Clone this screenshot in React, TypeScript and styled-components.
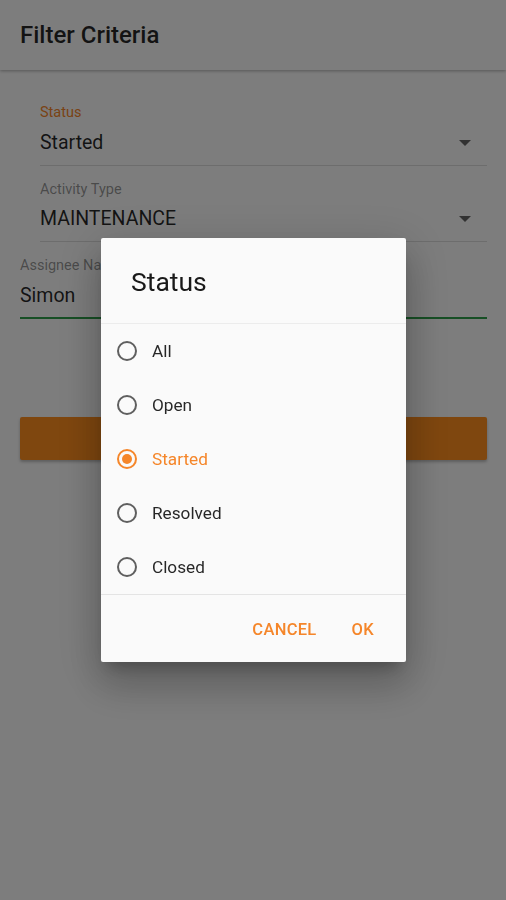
import React from "react";
import styled, { createGlobalStyle } from "styled-components";

const GlobalStyle = createGlobalStyle`
  html, body { margin: 0; padding: 0; }
  body {
    font-family: Roboto, "Noto Sans", "Liberation Sans", sans-serif;
    background: #fafafa;
  }
  * { box-sizing: border-box; }
`;

const ACCENT = "#f5862a";

const Page = styled.div`
  width: 506px;
  min-height: 900px;
  background: #fafafa;
  display: flex;
  flex-direction: column;
`;

const Header = styled.header`
  height: 70px;
  display: flex;
  align-items: center;
  padding: 0 20px;
  background: #fafafa;
  box-shadow: 0 1px 3px rgba(0, 0, 0, 0.3);
`;

const Title = styled.h1`
  margin: 0;
  font-size: 24px;
  font-weight: 500;
  color: rgba(0, 0, 0, 0.85);
  line-height: 28px;
  margin-top: -1px;
`;

const Form = styled.div`
  display: flex;
  flex-direction: column;
  padding: 35px 19px 0 20px;
`;

const Field = styled.div<{ $indent: number; $first?: boolean; $focused?: boolean }>`
  display: flex;
  flex-direction: column;
  margin-left: ${(p) => p.$indent}px;
  margin-top: ${(p) => (p.$first ? 0 : 16)}px;
  padding-bottom: ${(p) => (p.$focused ? 9 : 10)}px;
  border-bottom: ${(p) => (p.$focused ? "2px solid #2e9e4a" : "1px solid rgba(0,0,0,0.12)")};
`;

const Label = styled.div<{ $active?: boolean }>`
  font-size: 14.5px;
  line-height: 16px;
  height: 16px;
  color: ${(p) => (p.$active ? ACCENT : "rgba(0,0,0,0.42)")};
`;

const ValueRow = styled.div<{ $gap: number }>`
  display: flex;
  align-items: center;
  justify-content: space-between;
  margin-top: ${(p) => p.$gap}px;
  height: 24px;
`;

const Value = styled.span`
  font-size: 19.5px;
  line-height: 24px;
  color: rgba(0, 0, 0, 0.85);
`;

const Caret = styled.span`
  width: 0;
  height: 0;
  border-left: 6px solid transparent;
  border-right: 6px solid transparent;
  border-top: 6px solid rgba(0, 0, 0, 0.6);
  margin-right: 16px;
`;

const ApplyButton = styled.div`
  margin-top: 98px;
  height: 43px;
  border-radius: 2px;
  background: #ff8e1e;
  box-shadow: 0 2px 3px rgba(0, 0, 0, 0.25);
`;

const Overlay = styled.div`
  position: fixed;
  inset: 0;
  background: rgba(0, 0, 0, 0.5);
  display: flex;
  align-items: center;
  justify-content: center;
`;

const Dialog = styled.div`
  width: 305px;
  background: #fafafa;
  border-radius: 2px;
  display: flex;
  flex-direction: column;
  box-shadow: 0 11px 15px -7px rgba(0, 0, 0, 0.25),
    0 24px 38px 3px rgba(0, 0, 0, 0.16), 0 9px 46px 8px rgba(0, 0, 0, 0.12);
  margin-left: 1px;
`;

const DialogTitle = styled.div`
  height: 86px;
  display: flex;
  align-items: center;
  padding: 2px 30px 0;
  font-size: 26.5px;
  font-weight: 400;
  color: rgba(0, 0, 0, 0.9);
  border-bottom: 1px solid #ececec;
`;

const OptionList = styled.div`
  display: flex;
  flex-direction: column;
  border-bottom: 1px solid #e4e4e4;
`;

const Option = styled.div<{ $checked?: boolean }>`
  height: 54px;
  display: flex;
  align-items: center;
  padding-left: 16px;
  gap: 15px;
  font-size: 17.2px;
  color: ${(p) => (p.$checked ? ACCENT : "rgba(0,0,0,0.85)")};
`;

const Radio = styled.span<{ $checked?: boolean }>`
  width: 20px;
  height: 20px;
  border-radius: 50%;
  border: 2px solid ${(p) => (p.$checked ? ACCENT : "#5f5f5f")};
  display: flex;
  align-items: center;
  justify-content: center;
  &::after {
    content: "";
    width: 10px;
    height: 10px;
    border-radius: 50%;
    background: ${(p) => (p.$checked ? ACCENT : "transparent")};
  }
`;

const Actions = styled.div`
  height: 67px;
  display: flex;
  align-items: center;
  justify-content: flex-end;
  padding-right: 32px;
  gap: 35px;
`;

const ActionButton = styled.span`
  font-size: 16.5px;
  font-weight: 500;
  color: ${ACCENT};
  letter-spacing: 0.3px;
  margin-top: 1px;
`;

const options = ["All", "Open", "Started", "Resolved", "Closed"];

export default function App() {
  const selected = "Started";
  return (
    <>
      <GlobalStyle />
      <Page>
        <Header>
          <Title>Filter Criteria</Title>
        </Header>
        <Form>
          <Field $indent={20} $first>
            <Label $active>Status</Label>
            <ValueRow $gap={10}>
              <Value>Started</Value>
              <Caret />
            </ValueRow>
          </Field>
          <Field $indent={20}>
            <Label>Activity Type</Label>
            <ValueRow $gap={9}>
              <Value>MAINTENANCE</Value>
              <Caret />
            </ValueRow>
          </Field>
          <Field $indent={0} $focused>
            <Label>Assignee Name</Label>
            <ValueRow $gap={10}>
              <Value>Simon</Value>
            </ValueRow>
          </Field>
          <ApplyButton />
        </Form>
      </Page>
      <Overlay>
        <Dialog>
          <DialogTitle>Status</DialogTitle>
          <OptionList>
            {options.map((o) => (
              <Option key={o} $checked={o === selected}>
                <Radio $checked={o === selected} />
                {o}
              </Option>
            ))}
          </OptionList>
          <Actions>
            <ActionButton>CANCEL</ActionButton>
            <ActionButton>OK</ActionButton>
          </Actions>
        </Dialog>
      </Overlay>
    </>
  );
}
